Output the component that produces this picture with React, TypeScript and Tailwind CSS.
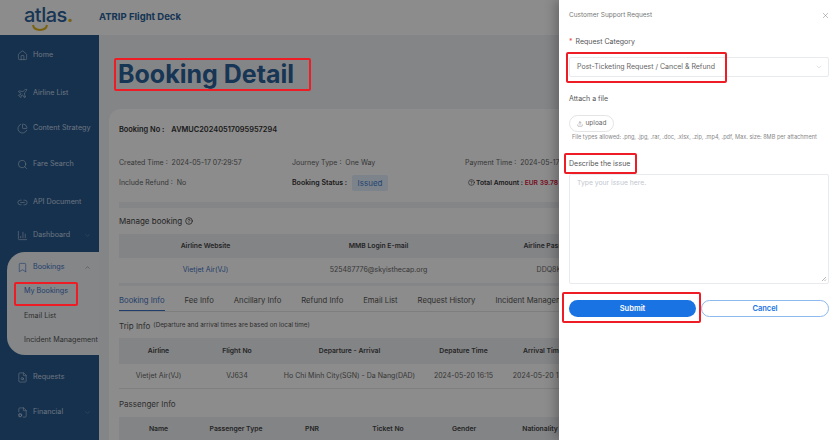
import { House, Plane, ChartPie, Search, Link2, ChartColumn, Bookmark, FileSearch, FileCog, ChevronDown, ChevronUp, X, Upload, CircleUser, CircleHelp } from "lucide-react";

const font = { fontFamily: "Inter, 'Liberation Sans', sans-serif" };

function NavItem({ icon: Icon, label, h, chev }: { icon: any; label: string; h: string; chev?: boolean }) {
  return (
    <div className={`flex shrink-0 items-center pl-[17px] pr-2 text-[7.2px] text-[#c3d3e4] ${h}`}>
      <Icon size={11} strokeWidth={1.2} className="mr-[5px] shrink-0 text-[#d5e2f0]" />
      <span className="whitespace-nowrap">{label}</span>
      {chev && <ChevronDown size={7} className="ml-auto text-[#6f93b8]" />}
    </div>
  );
}

function Sidebar() {
  return (
    <aside className="flex w-[99px] shrink-0 flex-col overflow-hidden bg-[#285a8e] pt-[2px]">
      <NavItem icon={House} label="Home" h="h-[36px]" />
      <NavItem icon={Plane} label="Airline List" h="h-[40px]" />
      <NavItem icon={ChartPie} label="Content Strategy" h="h-[30px]" />
      <NavItem icon={Search} label="Fare Search" h="h-[42px]" />
      <NavItem icon={Link2} label="API Document" h="h-[34px]" />
      <NavItem icon={ChartColumn} label="Dashboard" h="h-[33px]" chev />
      <div className="ml-[7px] flex h-[103px] shrink-0 flex-col rounded-l-[18px] bg-[#f2f5f8] pt-[4px] text-[7.2px] text-[#555]">
        <div className="flex h-[22px] items-center pl-[10px] pr-2 text-[#3f74c4]">
          <Bookmark size={11} strokeWidth={1.4} className="mr-[5px]" />
          <span>Bookings</span>
          <ChevronUp size={7} className="ml-auto text-[#888]" />
        </div>
        <div className="flex h-[26px] items-center pl-[17px] text-[#3f74c4]">My Bookings</div>
        <div className="flex h-[24px] items-center pl-[17px]">Email List</div>
        <div className="flex h-[25px] items-center whitespace-nowrap pl-[17px]">Incident Management</div>
      </div>
      <NavItem icon={FileSearch} label="Requests" h="h-[44px]" />
      <NavItem icon={FileCog} label="Financial" h="h-[26px]" chev />
      <NavItem icon={CircleUser} label="" h="h-[40px]" />
    </aside>
  );
}

function Row({ cols, head, h }: { cols: [string, string][]; head?: boolean; h: string }) {
  return (
    <div className={`flex w-[620px] items-center ${h} ${head ? "bg-[#eef1f5] text-[6.8px] font-semibold text-[#444]" : "border-b border-[#e8e8e8] text-[7px] text-[#666]"}`}>
      {cols.map(([t, w]) => (
        <div key={t} className={`shrink-0 whitespace-nowrap text-center ${w}`}>{t}</div>
      ))}
    </div>
  );
}

function Main() {
  return (
    <main className="flex w-[470px] flex-none flex-col overflow-hidden bg-[#f1f3f6] pl-[10px]">
      <h1 className="flex h-[74px] shrink-0 items-center pl-[9px] pt-[4px] text-[25px] font-bold leading-none text-[#2a6199]">Booking Detail</h1>
      <section className="flex-1 overflow-hidden rounded-tl-[12px] bg-white pl-[10px] pt-[13px] text-[7px] text-[#666]">
        <div className="flex h-[16px] items-center text-[7.4px] font-semibold text-[#333]">
          <span className="mr-[7px]">Booking No :</span><span>AVMUC20240517095957294</span>
        </div>
        <div className="mt-[15px] flex h-[20px] items-center whitespace-nowrap">
          <span className="w-[173px]">Created Time :&nbsp; 2024-05-17 07:29:57</span>
          <span className="w-[173px]">Journey Type :&nbsp; One Way</span>
          <span>Payment Time :&nbsp; 2024-05-17</span>
        </div>
        <div className="flex h-[20px] items-center whitespace-nowrap">
          <span className="w-[173px]">Include Refund :&nbsp; No</span>
          <span className="flex w-[176px] items-center font-semibold text-[#333]">
            Booking Status :
            <span className="ml-[5px] flex h-[16px] w-[36px] items-center justify-center rounded-[2px] bg-[#e4effb] text-[8px] font-normal text-[#3f7fd0]">Issued</span>
          </span>
          <span className="flex items-center text-[6.7px] font-semibold text-[#333]">
            <CircleHelp size={7} className="mr-[1px]" />Total Amount :&nbsp;<span className="text-[#d9183b]">EUR 39.78</span>
          </span>
        </div>
        <div className="mt-[9px] h-[6px] bg-[#f1f3f6]" />
        <div className="mt-[6px] flex h-[13px] items-center gap-[3px] text-[8px] text-[#444]">
          Manage booking <CircleHelp size={8} className="text-[#222]" />
        </div>
        <div className="mt-[7px]">
          <Row head h="h-[24px]" cols={[["Airline Website", "w-[173px]"], ["MMB Login E-mail", "w-[173px]"], ["Airline Password", "w-[172px]"]]} />
          <div className="flex h-[25px] w-[620px] items-center text-[7px]">
            <div className="w-[173px] text-center text-[#3f74c4]">Vietjet Air(VJ)</div>
            <div className="w-[173px] text-center">525487776@skyisthecap.org</div>
            <div className="w-[172px] text-center">DDQ8K2</div>
          </div>
        </div>
        <div className="h-[3px] bg-[#f1f3f6]" />
        <nav className="mt-[6px] flex h-[20px] w-[620px] gap-[20px] whitespace-nowrap border-b border-[#e5e5e5] text-[7.7px] text-[#555]">
          <span className="border-b border-[#3f74c4] pt-[3px] text-[#3f74c4]">Booking Info</span>
          <span className="pt-[3px]">Fee Info</span>
          <span className="pt-[3px]">Ancillary Info</span>
          <span className="pt-[3px]">Refund Info</span>
          <span className="pt-[3px]">Email List</span>
          <span className="pt-[3px]">Request History</span>
          <span className="pt-[3px]">Incident Management</span>
        </nav>
        <div className="mt-[6px] flex h-[16px] items-center gap-[3px] whitespace-nowrap text-[8px] text-[#555]">
          Trip Info <span className="text-[6.3px]">(Departure and arrival times are based on local time)</span>
        </div>
        <div className="mt-[4px]">
          <Row head h="h-[26px]" cols={[["Airline", "w-[79px]"], ["Flight No", "w-[78px]"], ["Departure - Arrival", "w-[147px]"], ["Depature Time", "w-[81px]"], ["Arrival Time", "w-[78px]"]]} />
          <Row h="h-[25px]" cols={[["Vietjet Air(VJ)", "w-[79px]"], ["VJ634", "w-[78px]"], ["Ho Chi Minh City(SGN) - Da Nang(DAD)", "w-[147px]"], ["2024-05-20 16:15", "w-[81px]"], ["2024-05-20 17:40", "w-[78px]"]]} />
        </div>
        <div className="mt-[7px] flex h-[16px] items-center text-[8px] text-[#555]">Passenger Info</div>
        <div className="mt-[5px]">
          <Row head h="h-[25px]" cols={[["Name", "w-[79px]"], ["Passenger Type", "w-[76px]"], ["PNR", "w-[76px]"], ["Ticket No", "w-[76px]"], ["Gender", "w-[76px]"], ["Nationality", "w-[76px]"]]} />
        </div>
      </section>
    </main>
  );
}

function Drawer() {
  return (
    <aside className="absolute inset-y-0 right-0 flex w-[274px] flex-col bg-white pl-[10px] pr-[4px] shadow-[-4px_0_10px_rgba(0,0,0,0.25)]">
      <div className="flex h-[31px] items-center justify-between text-[6.5px] text-[#777]">
        <span>Customer Support Request</span>
        <X size={9} strokeWidth={1.2} className="mr-[-1px] text-[#777]" />
      </div>
      <div className="mt-[5px] flex h-[12px] items-center text-[7px] text-[#555]"><span className="mr-[3px] text-[#e5484d]">*</span>Request Category</div>
      <div className="mt-[9px] flex h-[20px] items-center justify-between rounded-[2px] border border-[#e8eaee] pl-[7px] pr-[5px] text-[7px] text-[#666]">
        <span>Post-Ticketing Request / Cancel &amp; Refund</span>
        <ChevronDown size={8} strokeWidth={1.2} className="text-[#bbb]" />
      </div>
      <div className="mt-[16px] flex h-[12px] items-center text-[7px] text-[#555]">Attach a file</div>
      <div className="mt-[10px] flex h-[17px] w-[45px] items-center justify-center gap-[3px] rounded-full border border-[#e4e4e4] text-[6.5px] text-[#666]">
        <Upload size={6} strokeWidth={1.5} />upload
      </div>
      <div className="flex h-[10px] items-center whitespace-nowrap pl-[3px] text-[5.6px] text-[#888]">File types allowed: .png, .jpg, .rar, .doc, .xlsx, .zip, .mp4, .pdf, Max. size: 8MB per attachment</div>
      <div className="mt-[16px] flex h-[12px] items-center text-[7px] text-[#555]">Describe the issue</div>
      <div className="relative mt-[4px] h-[110px] rounded-[2px] border border-[#e8eaee] px-[7px] pt-[3px] text-[6.8px] text-[#c2c7cf]">
        Type your issue here.
        <svg viewBox="0 0 6 6" className="absolute bottom-[1px] right-[1px] h-[6px] w-[6px] text-[#999]"><path d="M1 5 5 1M3.5 5 5 3.5" stroke="currentColor" strokeWidth="0.7" /></svg>
      </div>
      <div className="mt-[16px] flex h-[17px] gap-[5px] text-[7.5px] font-semibold">
        <div className="flex w-[127px] items-center justify-center rounded-full bg-[#1a73e3] text-white">Submit</div>
        <div className="flex w-[128px] items-center justify-center rounded-full border border-[#8db9ee] text-[#1a73e3]">Cancel</div>
      </div>
    </aside>
  );
}

export default function App() {
  return (
    <div style={font} className="relative flex h-[440px] w-[833px] flex-col overflow-hidden bg-[#f1f3f6]">
      <header className="flex h-[35px] shrink-0 items-center bg-white pl-[24px] shadow-sm">
        <div className="relative -mt-[5px] w-[75px] text-[20px] font-medium leading-none tracking-tight text-[#2a6199]">
          atlas<span className="font-bold text-[#e0b31c]">.</span>
          <svg viewBox="0 0 16 7" className="absolute left-[8px] top-[19px] h-[7px] w-[16px]"><path d="M1 1c1 6.5 13 6.5 14 0" fill="none" stroke="#e0b31c" strokeWidth="2" /></svg>
        </div>
        <span className="text-[9.5px] font-bold text-[#2a6199]">ATRIP Flight Deck</span>
      </header>
      <div className="flex min-h-0 flex-1">
        <Sidebar />
        <Main />
      </div>
      <div className="absolute inset-0 bg-black/45" />
      <Drawer />
      <div className="absolute left-[114px] top-[58px] h-[33px] w-[197px] rounded-[2px] border-2 border-[#ee1c25]" />
      <div className="absolute left-[14px] top-[282px] h-[24px] w-[64px] rounded-[2px] border-2 border-[#ee1c25]" />
      <div className="absolute left-[566px] top-[52px] h-[31px] w-[161px] rounded-[2px] border-2 border-[#ee1c25]" />
      <div className="absolute left-[564px] top-[153px] h-[21px] w-[73px] rounded-[2px] border-2 border-[#ee1c25]" />
      <div className="absolute left-[562px] top-[292px] h-[31px] w-[139px] rounded-[2px] border-2 border-[#ee1c25]" />
    </div>
  );
}
